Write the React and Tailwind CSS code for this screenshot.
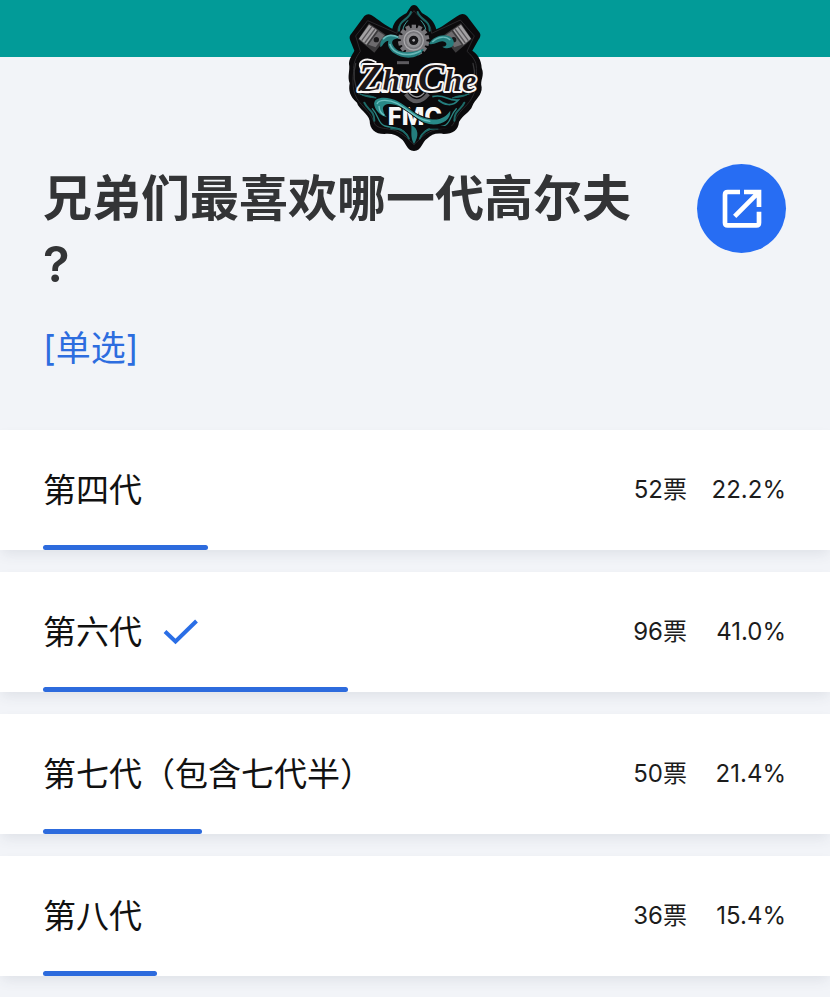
const options = [
  { name: "第四代", votes: 52, percent: 22.2 },
  { name: "第六代", votes: 96, percent: 41.0, selected: true },
  { name: "第七代（包含七代半）", votes: 50, percent: 21.4 },
  { name: "第八代", votes: 36, percent: 15.4 },
];

function Piston() {
  return (
    <g>
      <path d="M70 118 L102 70 L152 104 L142 128 L118 158 Z" fill="#3c3b3d" />
      <path d="M72 116 L102 74 L126 90 L94 134 Z" fill="#a3a1a3" />
      <path d="M80 122 L111 80 M89 129 L120 87" stroke="#5a585b" strokeWidth="4" />
      <path d="M100 134 L130 94 L148 106 L122 142 Z" fill="#6d6b6e" />
      <circle cx="124" cy="119" r="8" fill="#1a191b" />
    </g>
  );
}

function Flourish() {
  return (
    <g fill="none" strokeLinecap="round">
      <path d="M228 36 C222 60 190 60 192 92" stroke="#1d6967" strokeWidth="6" />
      <path d="M218 62 C210 72 205 78 204 88" stroke="#3d9c99" strokeWidth="3" />
      <path d="M62 190 C52 225 58 255 72 282" stroke="#343436" strokeWidth="4" />
      <path d="M75 282 C90 288 112 286 124 294 C104 292 88 290 75 282" fill="#278582" stroke="#1d6967" strokeWidth="3" />
      <path d="M88 308 C98 332 118 330 118 362" stroke="#1d6967" strokeWidth="6" />
      <path d="M112 326 C132 346 128 372 150 378 C182 386 200 380 218 408" stroke="#2a8683" strokeWidth="4" />
      <path d="M168 386 C194 384 212 392 222 416" stroke="#1d6967" strokeWidth="5" />
    </g>
  );
}

const ribbon =
  "M118 316 C112 288 160 288 188 304 C224 322 244 354 286 358 C318 362 334 348 346 332 C348 360 318 378 282 372 C242 362 220 322 180 314 C158 308 142 314 144 328 C146 340 150 348 156 352 C138 348 122 334 118 316 Z";

function Logo({ className }) {
  const teeth = Array.from({ length: 14 }, (_, i) => (i * 360) / 14);
  return (
    <svg viewBox="0 0 480 480" className={className} role="img" aria-label="ZhuChe FMC">
      <path
        d="M237 15 C248 15 253 30 262 40 C284 52 298 64 304 88 C326 78 350 58 374 44 Q387 38 396 48 L434 98 Q440 106 430 120 L412 152 C426 160 440 180 440 204 C450 228 434 240 440 262 C442 286 420 298 412 318 C406 336 382 346 372 366 C370 390 354 402 326 402 C302 398 290 404 276 416 C262 424 260 452 237 453 C214 452 212 424 198 416 C184 404 170 400 148 402 C120 402 104 386 104 362 C100 340 70 326 66 308 C44 290 40 270 44 250 C36 230 46 210 42 192 C42 176 50 168 58 152 L46 122 Q40 110 50 100 L88 48 Q98 38 110 46 C132 60 152 78 172 86 C178 62 194 50 214 40 C222 30 226 15 237 15 Z"
        fill="#0b0a0c"
      />
      <path
        d="M237 32 C250 56 288 62 290 100 L376 60 L418 108 L396 154 C420 176 426 190 424 214 C430 260 416 292 396 314 C378 332 366 344 358 366 C350 390 320 382 292 392 C266 402 252 420 237 434 C222 420 208 402 182 392 C154 382 122 390 116 364 C110 344 96 332 80 314 C56 290 50 260 56 214 C54 190 62 174 76 154 L62 108 L98 62 L186 100 C188 62 222 56 237 32 Z"
        fill="none"
        stroke="#29282b"
        strokeWidth="3"
      />
      <Piston />
      <g transform="translate(480 0) scale(-1 1)">
        <Piston />
      </g>
      <Flourish />
      <g transform="translate(476 0) scale(-1 1)">
        <Flourish />
      </g>

      <g fill="#77767a">
        {teeth.map((angle) => (
          <rect key={angle} x="230" y="74" width="13" height="16" transform={`rotate(${angle} 236 121)`} />
        ))}
        <circle cx="236" cy="121" r="38" />
      </g>
      <circle cx="236" cy="121" r="29" fill="none" stroke="#aaa9ac" strokeWidth="4" />
      <circle cx="236" cy="121" r="22" fill="#929194" />
      <circle cx="236" cy="121" r="14" fill="#171618" />
      <circle cx="236" cy="121" r="4" fill="#aaa9ac" />

      <path d="M136 142 C132 108 168 96 196 116 C178 114 166 122 174 136 C190 166 234 158 266 146 C256 178 204 180 178 160 C164 150 156 138 160 122 C144 126 146 136 136 142 Z" fill="#247e7e" />
      <path d="M144 118 C156 102 176 104 190 112 M164 132 C176 166 222 172 258 152" fill="none" stroke="#68b8b8" strokeWidth="5" />
      <path d="M282 132 C300 100 348 98 356 124 C360 144 334 150 322 140 C334 140 338 132 330 126 C314 118 302 136 282 132 Z" fill="#247e7e" />
      <path d="M292 126 C310 108 334 108 346 120" fill="none" stroke="#68b8b8" strokeWidth="4" />

      <g fill="none" stroke="#5d5b5f">
        <path d="M212 282 Q244 326 280 282" strokeWidth="12" />
        <path d="M222 278 Q246 304 268 278" stroke="#99979a" strokeWidth="4" />
        <path d="M186 188 H222" strokeWidth="9" />
      </g>

      <text
        x="70"
        y="272"
        fill="#1d1719"
        stroke="#f8f6f5"
        strokeWidth="12"
        strokeLinejoin="round"
        paintOrder="stroke"
        className="font-['Liberation_Serif',serif] text-[96px] font-bold italic"
      >
        <tspan className="text-[118px]">Z</tspan>
        <tspan>hu</tspan>
        <tspan className="text-[118px]">C</tspan>
        <tspan>he</tspan>
      </text>
      <path d="M78 206 C64 186 92 168 122 186 M78 274 C98 286 124 262 156 274" fill="none" stroke="#f8f6f5" strokeWidth="6" strokeLinecap="round" />

      <text x="158" y="375" fill="#f7f7f7" className="font-['Inter',sans-serif] text-[72px] font-extrabold">
        FMC
      </text>
      <path d={ribbon} fill="#0b0a0c" stroke="#0b0a0c" strokeWidth="6" />
      <path d={ribbon} fill="#288987" />
      <path d="M284 378 H350 V386 H284 Z" fill="#0b0a0c" />
      <path d="M126 312 C132 296 164 300 186 310 C222 330 246 360 286 364 M132 318 C132 334 138 340 148 346" fill="none" stroke="#6bc0c0" strokeWidth="4" />
      <path d="M292 290 C330 280 336 304 370 300 C352 322 326 314 310 300" fill="none" stroke="#247e7e" strokeWidth="5" />
      <path d="M237 432 C224 408 232 392 228 374 C252 386 252 408 237 432 Z" fill="#247e7e" />
    </svg>
  );
}

function ShareIcon() {
  return (
    <svg viewBox="0 0 120 120" className="size-10" fill="none" stroke="white" strokeWidth="14" aria-hidden="true">
      <path d="M54 9 H17 Q9 9 9 17 V101 Q9 109 17 109 H103 Q111 109 111 101 V68" />
      <path d="M66 9 H111 V54 M38 82 L109 11" />
    </svg>
  );
}

function CheckIcon() {
  return (
    <svg viewBox="0 0 36 26" className="h-[26px] w-9" fill="none" stroke="#2a6ee6" strokeWidth="4" role="img" aria-label="已选">
      <path d="M2 12.5 L12.5 22.5 L33.5 2" />
    </svg>
  );
}

function Option({ name, votes, percent, selected }) {
  return (
    <li className="flex h-[120px] flex-col bg-white pr-11 pl-[43px] shadow-[0_6px_12px_-2px_rgba(60,70,90,0.10)]">
      <div className="flex flex-1 items-center justify-between pt-1">
        <div className="flex items-center gap-[21px] text-[33px] leading-10 text-[#111111]">
          <span>{name}</span>
          {selected && <CheckIcon />}
        </div>
        <div className="flex text-2xl text-[#1c1c1c]">
          <span>{votes}票</span>
          <span className="w-[99px] text-right">{percent.toFixed(1)}%</span>
        </div>
      </div>
      <div className="h-[5px] rounded-full bg-[#2d6bdd]" style={{ width: `${percent}%` }} />
    </li>
  );
}

export default function App() {
  return (
    <div className="min-h-screen bg-[#f2f4f8] font-['Inter','Noto_Sans_CJK_SC',sans-serif]">
      <header className="relative h-[57px] bg-[#029b98]">
        <Logo className="absolute top-0 left-1/2 size-40 -translate-x-1/2" />
      </header>
      <main>
        <section className="flex h-[373px] items-start justify-between pt-[107px] pr-11 pl-[43px]">
          <div className="pt-0.5">
            <h1 className="text-[49px] leading-[66px] font-bold text-[#333436]">
              兄弟们最喜欢哪一代高尔夫
              <br />
              <span className="font-semibold">?</span>
            </h1>
            <p className="mt-[30px] text-[35px] leading-10 text-[#2d6ddf]">[单选]</p>
          </div>
          <button
            type="button"
            aria-label="分享"
            className="flex size-[89px] shrink-0 items-center justify-center rounded-full bg-[#276df3]"
          >
            <ShareIcon />
          </button>
        </section>
        <ul className="flex flex-col gap-[22px]">
          {options.map((option) => (
            <Option key={option.name} {...option} />
          ))}
        </ul>
      </main>
    </div>
  );
}
